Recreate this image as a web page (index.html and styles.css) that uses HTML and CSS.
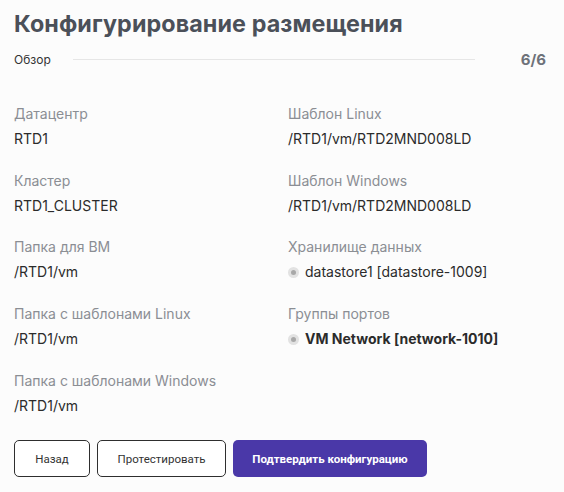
FILE: index.html
```html
<!DOCTYPE html>
<html lang="ru">
<head>
<meta charset="utf-8">
<link rel="stylesheet" href="styles.css">
</head>
<body>
<div class="page">
  <h1 class="title">Конфигурирование размещения</h1>
  <div class="steps">
    <span class="step-name">Обзор</span>
    <span class="step-line"></span>
    <span class="step-count">6/6</span>
  </div>
  <div class="grid">
    <div class="col">
      <div class="field"><div class="label">Датацентр</div><div class="value">RTD1</div></div>
      <div class="field"><div class="label">Кластер</div><div class="value">RTD1_CLUSTER</div></div>
      <div class="field"><div class="label">Папка для ВМ</div><div class="value">/RTD1/vm</div></div>
      <div class="field"><div class="label">Папка с шаблонами Linux</div><div class="value">/RTD1/vm</div></div>
      <div class="field"><div class="label">Папка с шаблонами Windows</div><div class="value">/RTD1/vm</div></div>
    </div>
    <div class="col">
      <div class="field"><div class="label">Шаблон Linux</div><div class="value">/RTD1/vm/RTD2MND008LD</div></div>
      <div class="field"><div class="label">Шаблон Windows</div><div class="value">/RTD1/vm/RTD2MND008LD</div></div>
      <div class="field"><div class="label">Хранилище данных</div><div class="value with-dot"><span class="dot"></span>datastore1 [datastore-1009]</div></div>
      <div class="field"><div class="label">Группы портов</div><div class="value with-dot strong"><span class="dot"></span>VM Network [network-1010]</div></div>
    </div>
  </div>
  <div class="actions">
    <button class="btn btn-outline btn-back">Назад</button>
    <button class="btn btn-outline btn-test">Протестировать</button>
    <button class="btn btn-primary">Подтвердить конфигурацию</button>
  </div>
</div>
</body>
</html>
```

FILE: styles.css
```css
html, body {
  margin: 0;
  padding: 0;
  background: #fcfcfc;
}
body {
  font-family: "Inter", "Noto Sans", sans-serif;
  color: #2b2b2b;
}
.page {
  padding: 8px 14px 0 14px;
  width: 536px;
}
.title {
  margin: 0;
  font-size: 23.3px;
  line-height: 32px;
  font-weight: 700;
  color: #4b5059;
  letter-spacing: 0.1px;
}
.steps {
  display: flex;
  align-items: center;
  margin-top: 10px;
  height: 18px;
}
.step-name {
  font-size: 12px;
  color: #333;
}
.step-line {
  flex: 1;
  height: 1px;
  background: #e6e6e6;
  margin: 0 46px 0 22px;
}
.step-count {
  font-size: 15px;
  font-weight: 700;
  color: #6e727a;
  margin-right: 4px;
}
.grid {
  display: grid;
  grid-template-columns: 274px 1fr;
  margin-top: 36px;
}
.field {
  height: 66.7px;
  font-size: 14px;
}
.label {
  color: #8b8e94;
  line-height: 20px;
}
.value {
  margin-top: 5px;
  line-height: 20px;
  color: #2b2b2b;
}
.with-dot {
  display: flex;
  align-items: center;
}
.strong {
  font-weight: 700;
}
.dot {
  width: 11px;
  height: 11px;
  border-radius: 50%;
  background: #e2e2e2;
  margin-right: 6px;
  position: relative;
  flex: none;
}
.dot::after {
  content: "";
  position: absolute;
  left: 3px;
  top: 3px;
  width: 5px;
  height: 5px;
  border-radius: 50%;
  background: #a8a8a8;
}
.actions {
  display: flex;
  gap: 7px;
  margin-top: 3px;
}
.btn {
  height: 37px;
  border-radius: 5px;
  font-family: "Roboto", sans-serif;
  font-size: 11.5px;
  cursor: pointer;
}
.btn-outline {
  background: #fff;
  border: 1px solid #2e2e2e;
  color: #333;
}
.btn-back { width: 76px; }
.btn-test { width: 129px; }
.btn-primary {
  width: 194px;
  background: #4a38a8;
  border: none;
  color: #fff;
  font-weight: 700;
}
```
